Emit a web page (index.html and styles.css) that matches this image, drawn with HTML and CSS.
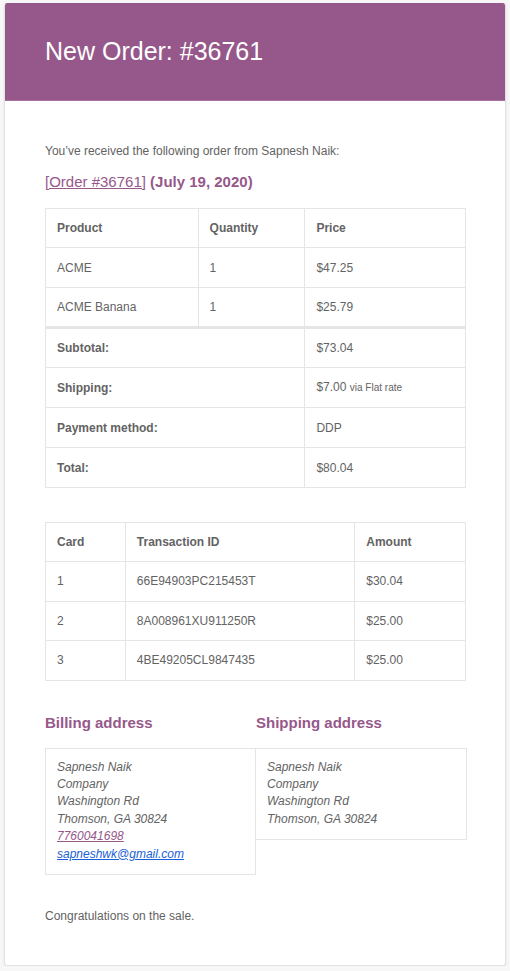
FILE: index.html
```html
<!DOCTYPE html>
<html>
<head>
<meta charset="utf-8">
<title>New Order: #36761</title>
<link rel="stylesheet" href="styles.css">
</head>
<body>
<div class="card">
  <div class="header">
    <h1 class="title">New Order: #36761</h1>
  </div>
  <div class="content">
    <p class="intro">You’ve received the following order from Sapnesh Naik:</p>
    <h2 class="order-heading"><a class="order-link" href="#">[Order #36761]</a> (July 19, 2020)</h2>

    <table class="data order-table">
      <colgroup><col class="c-prod"><col class="c-qty"><col class="c-price"></colgroup>
      <thead>
        <tr><th>Product</th><th>Quantity</th><th>Price</th></tr>
      </thead>
      <tbody>
        <tr><td>ACME</td><td>1</td><td>$47.25</td></tr>
        <tr><td>ACME Banana</td><td>1</td><td>$25.79</td></tr>
      </tbody>
      <tfoot>
        <tr class="first"><th colspan="2">Subtotal:</th><td>$73.04</td></tr>
        <tr><th colspan="2">Shipping:</th><td>$7.00 <small class="via">via Flat rate</small></td></tr>
        <tr><th colspan="2">Payment method:</th><td>DDP</td></tr>
        <tr><th colspan="2">Total:</th><td>$80.04</td></tr>
      </tfoot>
    </table>

    <table class="data tx-table">
      <colgroup><col class="c-card"><col class="c-tx"><col class="c-amt"></colgroup>
      <thead>
        <tr><th>Card</th><th>Transaction ID</th><th>Amount</th></tr>
      </thead>
      <tbody>
        <tr><td>1</td><td>66E94903PC215453T</td><td>$30.04</td></tr>
        <tr><td>2</td><td>8A008961XU911250R</td><td>$25.00</td></tr>
        <tr><td>3</td><td>4BE49205CL9847435</td><td>$25.00</td></tr>
      </tbody>
    </table>

    <div class="addresses">
      <div class="addr-col">
        <h2 class="addr-heading">Billing address</h2>
        <address class="addr-box">
          Sapnesh Naik<br>
          Company<br>
          Washington Rd<br>
          Thomson, GA 30824<br>
          <a class="phone" href="#">7760041698</a><br>
          <a class="email" href="#">sapneshwk@gmail.com</a>
        </address>
      </div>
      <div class="addr-col">
        <h2 class="addr-heading">Shipping address</h2>
        <address class="addr-box ship">
          Sapnesh Naik<br>
          Company<br>
          Washington Rd<br>
          Thomson, GA 30824
        </address>
      </div>
    </div>

    <p class="outro">Congratulations on the sale.</p>
  </div>
</div>
</body>
</html>
```

FILE: styles.css
```css
html, body {
  margin: 0;
  padding: 0;
}
body {
  background: #f7f7f7;
  font-family: "Liberation Sans", Arial, Helvetica, sans-serif;
  color: #636363;
}
.card {
  margin: 3px 4px 0 4px;
  width: 502px;
  box-sizing: border-box;
  background: #fff;
  border: 1px solid #e2e2e2;
  border-top: 0;
  border-radius: 3px;
  box-shadow: 0 1px 3px rgba(0,0,0,0.08);
  overflow: hidden;
}
.header {
  background: #96588a;
  height: 98px;
  box-sizing: border-box;
  padding: 0 40px;
  display: flex;
  align-items: center;
  border-bottom: 1px solid #a872a0;
}
.title {
  margin: 0;
  color: #fff;
  font-weight: 400;
  font-size: 25px;
  line-height: 30px;
  position: relative;
  top: -1px;
}
.content {
  padding: 40px 40px 39px 40px;
}
.intro {
  margin: 0 0 11px;
  font-size: 12px;
  line-height: 20px;
}
.order-heading {
  margin: 0 0 16px;
  font-size: 15px;
  line-height: 20px;
  font-weight: 700;
  color: #96588a;
}
.order-link {
  color: #96588a;
  font-weight: 400;
  text-decoration: underline;
}
table.data {
  width: 421px;
  border-collapse: collapse;
  border: 1px solid #e5e5e5;
  font-size: 12px;
  color: #636363;
}
table.data th,
table.data td {
  border: 1px solid #e5e5e5;
  padding: 0 11px;
  height: 40px;
  box-sizing: border-box;
  line-height: 18px;
  text-align: left;
  vertical-align: middle;
}
table.data thead th {
  height: 39px;
}
table.data th {
  font-weight: 700;
}
table.data td {
  font-weight: 400;
}
table.data tfoot tr.first th,
table.data tfoot tr.first td {
  border-top: 3px solid #e5e5e5;
  height: 40px;
}
.c-prod { width: 153px; }
.c-qty { width: 107px; }
.c-price { width: 161px; }
.c-card { width: 80px; }
.c-tx { width: 230px; }
.c-amt { width: 111px; }
.via {
  font-size: 10px;
}
.order-table {
  margin-bottom: 34px;
}
.tx-table tbody td {
  height: 39.5px;
}
.tx-table {
  margin-bottom: 32px;
}
.addresses {
  display: grid;
  grid-template-columns: 211px 211px;
  align-items: start;
}
.addr-heading {
  margin: 0 0 15px;
  font-size: 15px;
  line-height: 20px;
  font-weight: 700;
  color: #96588a;
}
.addr-box {
  display: block;
  font-style: italic;
  font-size: 12px;
  line-height: 17.4px;
  color: #636363;
  padding: 10px 11px 11px;
  border: 1px solid #e5e5e5;
}
.addr-box.ship {
  border-left: 0;
}
.phone {
  color: #96588a;
}
.email {
  color: #1a5fd6;
}
.outro {
  margin: 31px 0 0;
  font-size: 12px;
  line-height: 20px;
}
```
